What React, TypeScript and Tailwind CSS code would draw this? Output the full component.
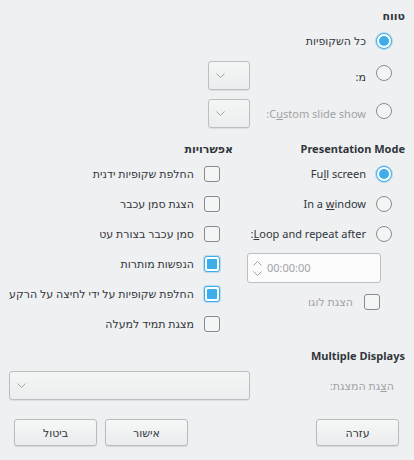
import React from 'react';

const Radio: React.FC<{ checked?: boolean; lift?: string }> = ({ checked, lift = '' }) =>
  checked ? (
    <span className={`flex w-4 h-4 shrink-0 items-center justify-center rounded-full border border-[#3daee9] bg-white shadow-[0_0_0_1px_rgba(61,174,233,0.35)] ${lift}`}>
      <span className="w-[10px] h-[10px] rounded-full bg-[#3daee9]" />
    </span>
  ) : (
    <span className={`block w-4 h-4 shrink-0 rounded-full border border-[#898c8f] bg-[#f4f5f5] ${lift}`} />
  );

const Check: React.FC<{ checked?: boolean }> = ({ checked }) =>
  checked ? (
    <span className="flex w-4 h-4 shrink-0 p-[2px] rounded-[3px] border border-[#3daee9] bg-white shadow-[0_0_0_1px_rgba(61,174,233,0.3)]">
      <span className="w-full h-full rounded-[1px] bg-[#3daee9]" />
    </span>
  ) : (
    <span className="block w-4 h-4 shrink-0 rounded-[3px] border border-[#898c8f] bg-[#f4f5f5]" />
  );

const Chevron: React.FC<{ up?: boolean }> = ({ up }) => (
  <svg width="9" height="5" viewBox="0 0 9 5" className="block">
    <path
      d={up ? 'M0.5 4.5 L4.5 0.5 L8.5 4.5' : 'M0.5 0.5 L4.5 4.5 L8.5 0.5'}
      stroke="#a0a3a6"
      strokeWidth="1"
      fill="none"
    />
  </svg>
);

const Combo: React.FC<{ width: string }> = ({ width }) => (
  <div
    dir="ltr"
    className={`${width} h-[29px] flex items-center pl-[7px] rounded-[3px] border border-[#bcbec0] bg-gradient-to-b from-[#f4f5f5] to-[#ecedee] shadow-[0_1px_1px_rgba(0,0,0,0.08)]`}
  >
    <Chevron />
  </div>
);

const Button: React.FC<{ label: string }> = ({ label }) => (
  <button className="w-[83px] h-[27px] flex items-center justify-center rounded-[3px] border border-[#b9bbbd] bg-gradient-to-b from-[#f6f7f7] to-[#ebeced] shadow-[0_1px_1px_rgba(0,0,0,0.1)] text-[#31363b]">
    {label}
  </button>
);

const App: React.FC = () => {
  const options = [
    { label: 'החלפת שקופיות ידנית', checked: false },
    { label: 'הצגת סמן עכבר', checked: false },
    { label: 'סמן עכבר בצורת עט', checked: false },
    { label: 'הנפשות מותרות', checked: true },
    { label: 'החלפת שקופיות על ידי לחיצה על הרקע', checked: true },
    { label: 'מצגת תמיד למעלה', checked: false },
  ];

  return (
    <div
      dir="rtl"
      className="w-[414px] h-[460px] bg-[#eff0f1] text-[#31363b] text-[11px] leading-[16px] px-[9px] pt-[8px] overflow-hidden"
      style={{ fontFamily: '"Noto Sans", "DejaVu Sans", sans-serif' }}
    >
      {/* Range */}
      <div className="font-bold">טווח</div>
      <div className="mt-[5px] h-[24px] flex items-center gap-[10px] pr-[13px]">
        <Radio checked />
        <span>כל השקופיות</span>
      </div>
      <div className="mt-[7px] h-[30px] flex items-center pr-[13px] pl-[199px]">
        <div className="flex items-center gap-[10px]">
          <Radio lift="mb-[5px]" />
          <span className="mt-[3px]">מ:</span>
        </div>
        <div className="mr-auto">
          <Combo width="w-[42px]" />
        </div>
      </div>
      <div className="mt-[8px] h-[30px] flex items-center pr-[13px] pl-[199px]">
        <div className="flex items-center gap-[10px]">
          <Radio lift="mb-[4px]" />
          <span dir="ltr" className="text-[#a0a3a6] mt-[2px]">
            :C<u>u</u>stom slide show
          </span>
        </div>
        <div className="mr-auto">
          <Combo width="w-[42px]" />
        </div>
      </div>

      {/* Presentation mode + options */}
      <div className="mt-[13px] flex">
        <div className="w-[172px] flex flex-col">
          <div className="font-bold">Presentation Mode</div>
          <div className="mt-[2px] h-[30px] flex items-center gap-[10px] pr-[13px]">
            <Radio checked />
            <span dir="ltr">
              Fu<u>l</u>l screen
            </span>
          </div>
          <div className="h-[30px] flex items-center gap-[10px] pr-[13px]">
            <Radio />
            <span dir="ltr">
              In a <u>w</u>indow
            </span>
          </div>
          <div className="h-[30px] flex items-center gap-[10px] pr-[13px]">
            <Radio />
            <span dir="ltr">
              :<u>L</u>oop and repeat after
            </span>
          </div>
          <div className="mt-[4px] pr-[24px]">
            <div
              dir="ltr"
              className="w-[134px] h-[30px] flex items-center gap-[5px] pl-[5px] rounded-[3px] border border-[#bcbec0] bg-[#fcfcfc]"
            >
              <div className="flex flex-col gap-[5px]">
                <Chevron up />
                <Chevron />
              </div>
              <span className="text-[#a0a3a6]">00:00:00</span>
            </div>
          </div>
          <div className="mt-[7px] h-[24px] flex items-center gap-[11px] pr-[25px]">
            <Check />
            <span className="text-[#a0a3a6]">הצגת לוגו</span>
          </div>
        </div>

        <div className="flex-1 flex flex-col">
          <div className="font-bold">אפשרויות</div>
          <div className="mt-[2px] flex flex-col">
            {options.map((o) => (
              <div key={o.label} className="h-[30px] flex items-center gap-[10px] pr-[13px]">
                <Check checked={o.checked} />
                <span>{o.label}</span>
              </div>
            ))}
          </div>
        </div>
      </div>

      {/* Multiple displays */}
      <div className="mt-[9px] font-bold">Multiple Displays</div>
      <div className="mt-[7px] h-[29px] flex items-center pr-[11px]">
        <span className="text-[#a0a3a6]">
          ה<u>צ</u>גת המצגת:
        </span>
        <div className="mr-auto">
          <Combo width="w-[241px]" />
        </div>
      </div>

      {/* Buttons */}
      <div className="mt-[19px] flex items-center pr-[6px] pl-[5px]">
        <Button label="עזרה" />
        <div className="mr-auto flex gap-[8px]">
          <Button label="אישור" />
          <Button label="ביטול" />
        </div>
      </div>
    </div>
  );
};

export default App;
